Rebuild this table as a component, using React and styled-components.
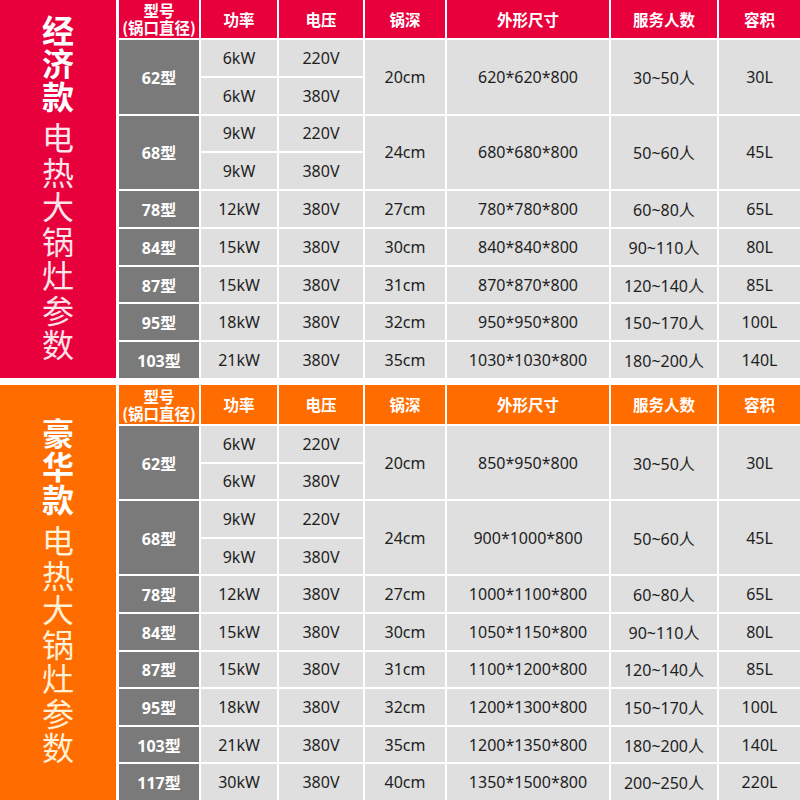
import React from 'react';
import styled, { createGlobalStyle } from 'styled-components';

const GlobalStyle = createGlobalStyle`
  html, body {
    margin: 0;
    padding: 0;
    background: #ffffff;
  }
  body {
    font-family: "Noto Sans", "Noto Sans CJK SC", sans-serif;
  }
`;

const Page = styled.div`
  width: 800px;
  height: 800px;
  display: flex;
  flex-direction: column;
  gap: 7px;
  background: #ffffff;
  overflow: hidden;
`;

const Section = styled.div`
  display: flex;
  gap: 3px;
  height: ${(p) => p.$height}px;
`;

const SidePanel = styled.div`
  width: 116px;
  flex-shrink: 0;
  background: ${(p) => p.$color};
  display: flex;
  flex-direction: column;
  align-items: center;
  justify-content: center;
  gap: 8px;
  font-family: "Noto Sans CJK SC", sans-serif;
  font-size: 32px;
  color: ${(p) => p.$text};
`;

const TitleText = styled.div`
  writing-mode: vertical-rl;
  text-orientation: upright;
  line-height: 40px;
  font-weight: ${(p) => (p.$bold ? 700 : 400)};
  letter-spacing: ${(p) => (p.$bold ? 1 : 2.5)}px;
  color: ${(p) => (p.$bold ? '#ffffff' : 'inherit')};
`;

const Table = styled.div`
  flex: 1;
  display: grid;
  grid-template-columns: 80px 76px 84px 80px 162px 106px 1fr;
  grid-template-rows: ${(p) => p.$head}px repeat(${(p) => p.$rows}, 1fr);
  gap: 2px;
`;

const HeadCell = styled.div`
  background: ${(p) => p.$color};
  color: #ffffff;
  font-family: "Noto Sans CJK SC", sans-serif;
  font-weight: 700;
  font-size: 15.5px;
  line-height: 17px;
  display: flex;
  align-items: center;
  justify-content: center;
  text-align: center;
  white-space: pre-line;
`;

const ModelCell = styled.div`
  grid-row: span ${(p) => p.$span};
  background: #7a7a7a;
  color: #ffffff;
  font-family: "Noto Sans", "Noto Sans CJK SC", sans-serif;
  font-weight: 700;
  font-size: 16px;
  display: flex;
  align-items: center;
  justify-content: center;
`;

const Cell = styled.div`
  grid-row: span ${(p) => p.$span || 1};
  background: #dfdfdf;
  color: #1e1e1e;
  font-family: "Noto Sans", "Noto Sans CJK SC", sans-serif;
  font-size: 16px;
  display: flex;
  align-items: center;
  justify-content: center;
  white-space: nowrap;
`;

const headers = ['型号\n(锅口直径)', '功率', '电压', '锅深', '外形尺寸', '服务人数', '容积'];

const economy = [
  { model: '62型', subs: [['6kW', '220V'], ['6kW', '380V']], depth: '20cm', size: '620*620*800', people: '30~50人', vol: '30L' },
  { model: '68型', subs: [['9kW', '220V'], ['9kW', '380V']], depth: '24cm', size: '680*680*800', people: '50~60人', vol: '45L' },
  { model: '78型', subs: [['12kW', '380V']], depth: '27cm', size: '780*780*800', people: '60~80人', vol: '65L' },
  { model: '84型', subs: [['15kW', '380V']], depth: '30cm', size: '840*840*800', people: '90~110人', vol: '80L' },
  { model: '87型', subs: [['15kW', '380V']], depth: '31cm', size: '870*870*800', people: '120~140人', vol: '85L' },
  { model: '95型', subs: [['18kW', '380V']], depth: '32cm', size: '950*950*800', people: '150~170人', vol: '100L' },
  { model: '103型', subs: [['21kW', '380V']], depth: '35cm', size: '1030*1030*800', people: '180~200人', vol: '140L' },
];

const deluxe = [
  { model: '62型', subs: [['6kW', '220V'], ['6kW', '380V']], depth: '20cm', size: '850*950*800', people: '30~50人', vol: '30L' },
  { model: '68型', subs: [['9kW', '220V'], ['9kW', '380V']], depth: '24cm', size: '900*1000*800', people: '50~60人', vol: '45L' },
  { model: '78型', subs: [['12kW', '380V']], depth: '27cm', size: '1000*1100*800', people: '60~80人', vol: '65L' },
  { model: '84型', subs: [['15kW', '380V']], depth: '30cm', size: '1050*1150*800', people: '90~110人', vol: '80L' },
  { model: '87型', subs: [['15kW', '380V']], depth: '31cm', size: '1100*1200*800', people: '120~140人', vol: '85L' },
  { model: '95型', subs: [['18kW', '380V']], depth: '32cm', size: '1200*1300*800', people: '150~170人', vol: '100L' },
  { model: '103型', subs: [['21kW', '380V']], depth: '35cm', size: '1200*1350*800', people: '180~200人', vol: '140L' },
  { model: '117型', subs: [['30kW', '380V']], depth: '40cm', size: '1350*1500*800', people: '200~250人', vol: '220L' },
];

const ParamTable = ({ color, head, data }) => {
  const rows = data.reduce((n, d) => n + d.subs.length, 0);
  return (
    <Table $head={head} $rows={rows}>
      {headers.map((h) => (
        <HeadCell key={h} $color={color}>{h}</HeadCell>
      ))}
      {data.map((d) => {
        const span = d.subs.length;
        return (
          <React.Fragment key={d.model}>
            <ModelCell $span={span}>{d.model}</ModelCell>
            <Cell>{d.subs[0][0]}</Cell>
            <Cell>{d.subs[0][1]}</Cell>
            <Cell $span={span}>{d.depth}</Cell>
            <Cell $span={span}>{d.size}</Cell>
            <Cell $span={span}>{d.people}</Cell>
            <Cell $span={span}>{d.vol}</Cell>
            {d.subs.slice(1).map((s, i) => (
              <React.Fragment key={i}>
                <Cell>{s[0]}</Cell>
                <Cell>{s[1]}</Cell>
              </React.Fragment>
            ))}
          </React.Fragment>
        );
      })}
    </Table>
  );
};

const Side = ({ color, text, title }) => (
  <SidePanel $color={color} $text={text}>
    <TitleText $bold>{title}</TitleText>
    <TitleText>电热大锅灶参数</TitleText>
  </SidePanel>
);

const App = () => (
  <>
    <GlobalStyle />
    <Page>
      <Section $height={378}>
        <Side color="#e8003c" text="#fde3ea" title="经济款" />
        <ParamTable color="#e8003c" head={38} data={economy} />
      </Section>
      <Section $height={415}>
        <Side color="#ff6c00" text="#fff0d6" title="豪华款" />
        <ParamTable color="#ff6c00" head={39} data={deluxe} />
      </Section>
    </Page>
  </>
);

export default App;
